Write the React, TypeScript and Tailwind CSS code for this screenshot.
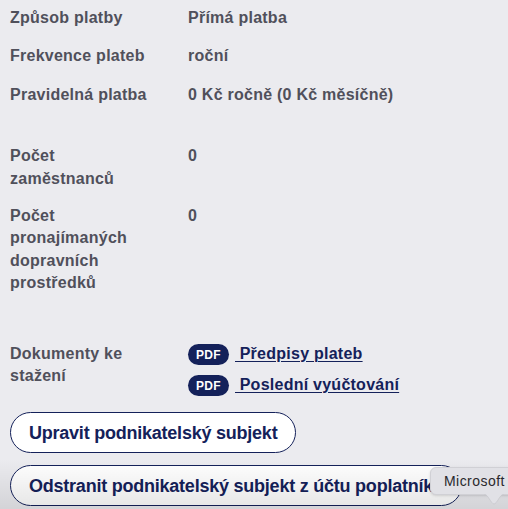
import type { ReactNode } from "react";

interface Detail {
  label: string;
  value: string;
}

const paymentDetails: Detail[] = [
  { label: "Způsob platby", value: "Přímá platba" },
  { label: "Frekvence plateb", value: "roční" },
  { label: "Pravidelná platba", value: "0 Kč ročně (0 Kč měsíčně)" },
];

const businessDetails: Detail[] = [
  { label: "Počet zaměstnanců", value: "0" },
  { label: "Počet pronajímaných dopravních prostředků", value: "0" },
];

const documents = ["Předpisy plateb", "Poslední vyúčtování"];

const Row = ({ label, children }: { label: string; children: ReactNode }) => (
  <div className="flex">
    <dt className="w-[178px] shrink-0 pr-12">
      <span className="block w-[142px]">{label}</span>
    </dt>
    <dd className="whitespace-nowrap">{children}</dd>
  </div>
);

const ActionButton = ({ children }: { children: ReactNode }) => (
  <button className="flex h-[41px] items-center rounded-full border border-[#14215a] bg-white px-[18px] pt-px text-[18px] font-bold tracking-[-0.23px] whitespace-nowrap text-[#14215a]">
    {children}
  </button>
);

const App = () => {
  return (
    <div className="relative h-[509px] w-[508px] overflow-hidden bg-[#ebebef] font-['Liberation_Sans',Arial,sans-serif]">
      <dl className="flex flex-col gap-4 pt-[7px] pl-[10px] text-[16px] leading-[22.4px] font-bold tracking-[0.25px] text-[#50505b]">
        {paymentDetails.map((detail) => (
          <Row key={detail.label} label={detail.label}>
            {detail.value}
          </Row>
        ))}
        <div className="mt-[23px] flex flex-col gap-[15px]">
          {businessDetails.map((detail) => (
            <Row key={detail.label} label={detail.label}>
              {detail.value}
            </Row>
          ))}
        </div>
        <div className="mt-[32px]">
          <Row label="Dokumenty ke stažení">
            <ul className="flex flex-col gap-[8.6px] text-[#14215a]">
              {documents.map((name) => (
                <li key={name} className="flex items-center">
                  <span className="mt-px mr-[6px] flex h-[21px] w-[41px] items-center justify-center rounded-full bg-[#14215a] pt-px text-[12px] tracking-[0.3px] text-white">
                    PDF
                  </span>
                  <a href="#" className="whitespace-pre underline decoration-1 underline-offset-2">
                    {" " + name}
                  </a>
                </li>
              ))}
            </ul>
          </Row>
        </div>
      </dl>

      <div className="mt-[16px] ml-[10px] flex flex-col items-start gap-3">
        <ActionButton>Upravit podnikatelský subjekt</ActionButton>
        <ActionButton>Odstranit podnikatelský subjekt z účtu poplatníka</ActionButton>
      </div>

      {/* Shade along the bottom edge */}
      <div className="pointer-events-none absolute inset-x-0 bottom-0 h-[50px] bg-linear-to-b from-transparent to-black/10" />

      {/* Dock tooltip */}
      <div className="absolute top-[467px] left-[430px] h-[28px] w-[100px] rounded-[6px] border border-[#d0d0d5] bg-[#e1e1e6] pl-[13px] text-[14px] leading-[27px] tracking-[0.45px] whitespace-nowrap text-[#29292c] shadow-sm">
        Microsoft
        <svg className="absolute top-[26px] left-[53px]" width="20" height="11" viewBox="0 0 20 11">
          <path d="M0 0C4 0 7 10 10 10S16 0 20 0" fill="#e1e1e6" stroke="#c6c6cc" strokeWidth="0.7" />
        </svg>
      </div>
    </div>
  );
};

export default App;
